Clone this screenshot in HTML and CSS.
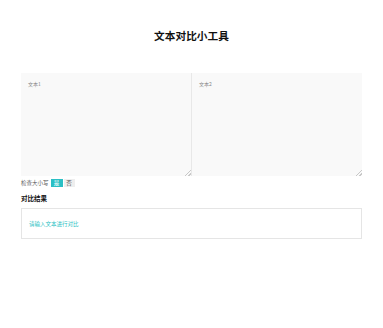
FILE: index.html
```html
<!DOCTYPE html>
<html lang="zh">
<head>
<meta charset="utf-8">
<title>文本对比小工具</title>
<link rel="stylesheet" href="styles.css">
</head>
<body>
<div class="page">
  <h1 class="title">文本对比小工具</h1>
  <div class="inputs">
    <textarea class="box left" placeholder="文本1"></textarea>
    <textarea class="box right" placeholder="文本2"></textarea>
  </div>
  <div class="controls">
    <span class="label">检查大小写</span>
    <span class="btn on">是</span>
    <span class="btn off">否</span>
  </div>
  <h2 class="subtitle">对比结果</h2>
  <div class="result">
    <span class="hint">请输入文本进行对比</span>
  </div>
</div>
</body>
</html>
```

FILE: styles.css
```css
html, body {
  margin: 0;
  padding: 0;
  background: #fff;
}
body {
  font-family: "Noto Sans CJK SC", "Noto Sans", sans-serif;
  color: #222;
}
.page {
  padding: 0 21px 0 21px;
}
.title {
  margin: 0;
  padding-top: 28px;
  height: 73px;
  box-sizing: border-box;
  font-size: 10.7px;
  line-height: 16px;
  font-weight: 700;
  text-align: center;
  color: #111;
}
.inputs {
  display: flex;
  height: 103px;
}
.box {
  flex: 1;
  margin: 0;
  border: none;
  background: #f9f9f9;
  padding: 7px 7px;
  font-family: inherit;
  font-size: 5px;
  color: #666;
  outline: none;
}
.box::-webkit-resizer {
  background:
    linear-gradient(135deg, transparent 78%, #c8c8c8 78%, #c8c8c8 83%, transparent 83%, transparent 89%, #c8c8c8 89%, #c8c8c8 94%, transparent 94%);
}
.box::placeholder {
  color: #888;
}
.left {
  border-right: 1px solid #e8e8e8;
}
.controls {
  display: flex;
  align-items: center;
  gap: 1px;
  margin-top: 2px;
  height: 10px;
  font-size: 5.5px;
  color: #555;
}
.label {
  margin-right: 1px;
}
.btn {
  display: inline-flex;
  align-items: center;
  justify-content: center;
  height: 8px;
  width: 12px;
}
.on {
  background: #2bbfc4;
  color: #fff;
}
.off {
  background: #eee;
  color: #555;
  width: 11px;
}
.subtitle {
  margin: 0;
  padding-top: 5px;
  height: 20px;
  box-sizing: border-box;
  font-size: 6.5px;
  line-height: 10px;
  font-weight: 700;
  color: #111;
}
.result {
  height: 31px;
  box-sizing: border-box;
  border: 1px solid #e5e5e5;
  display: flex;
  align-items: center;
  padding: 0 7px;
  font-size: 5.5px;
  color: #2bbfc4;
}
```
